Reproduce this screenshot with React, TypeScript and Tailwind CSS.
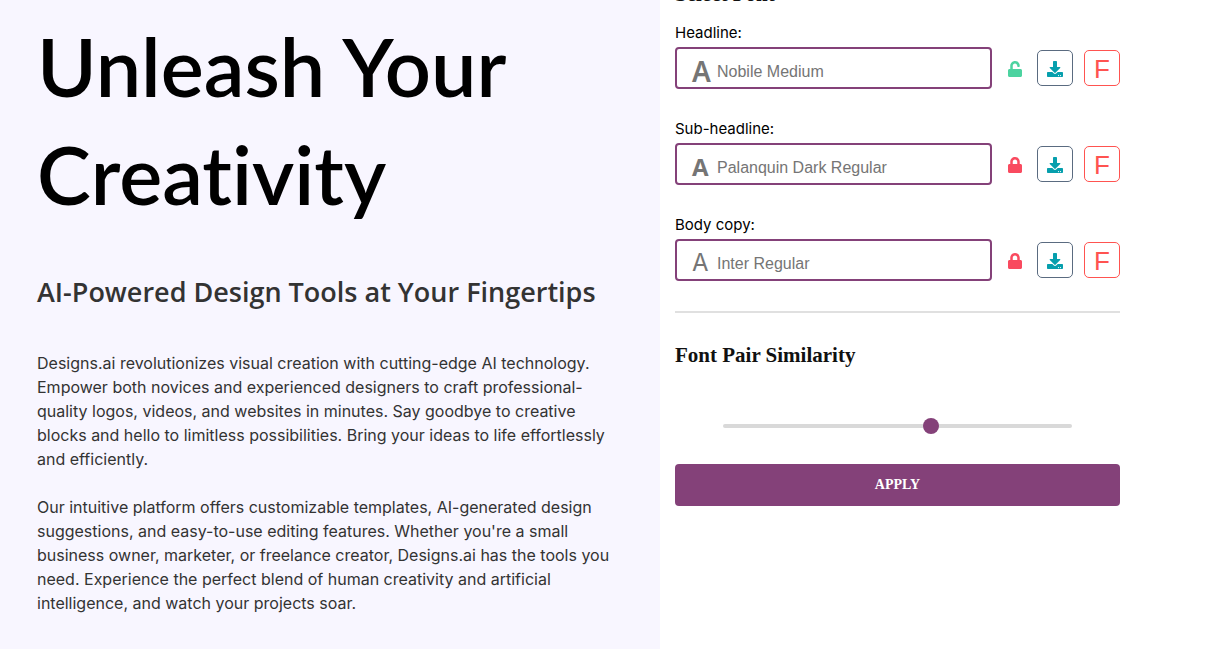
import { useState } from 'react';
import { FaDownload, FaLock, FaUnlock } from 'react-icons/fa';

type Slot = {
  id: string;
  label: string;
  font: string;
  locked: boolean;
  sample: string;
};

const slots: Slot[] = [
  { id: 'headline', label: 'Headline:', font: 'Nobile Medium', locked: false, sample: "font-['Noto_Sans',sans-serif] font-semibold text-[28px] leading-6" },
  { id: 'sub-headline', label: 'Sub-headline:', font: 'Palanquin Dark Regular', locked: true, sample: "font-['Open_Sans',sans-serif] font-bold text-2xl leading-8" },
  { id: 'body-copy', label: 'Body copy:', font: 'Inter Regular', locked: true, sample: "font-['Inter',sans-serif] font-normal text-2xl leading-8" },
];

function FontRow({ slot }: { slot: Slot }) {
  const [locked, setLocked] = useState(slot.locked);
  return (
    <div className="h-24">
      <label htmlFor={slot.id} className="block pb-1 font-['Inter',sans-serif] text-[15px] leading-5 text-black">
        {slot.label}
      </label>
      <div className="flex items-center">
        <div className="flex h-[42px] min-w-0 flex-1 items-center rounded border-2 border-[#844179] pt-1.5 pl-[15px] text-[#757575]">
          <span aria-hidden="true" className={`w-[25px] shrink-0 ${slot.sample}`}>A</span>
          <input
            id={slot.id}
            placeholder={slot.font}
            className="w-full min-w-0 bg-transparent pt-0.5 text-base outline-none placeholder:text-[#757575]"
          />
        </div>
        <button
          type="button"
          aria-label={locked ? 'Unlock font' : 'Lock font'}
          onClick={() => setLocked(!locked)}
          className={`ml-4 flex w-[14px] items-center pt-0.5 ${locked ? 'text-[#f94a5f]' : 'text-[#4cd3a0]'}`}
        >
          {locked ? <FaLock className="h-4 w-[14px]" /> : <FaUnlock className="h-4 w-[14px]" />}
        </button>
        <button type="button" aria-label="Download font" className="ml-[15px] flex size-9 items-center justify-center rounded-[5px] border border-[#5a6b80] pt-0.5 text-[#069fad]">
          <FaDownload className="size-4" />
        </button>
        <button type="button" aria-label="Font details" className="ml-[11px] flex size-9 items-center justify-center rounded-[5px] border border-[#ff5350] pt-0.5 text-[26px] leading-8 text-[#ff5350]">
          F
        </button>
      </div>
    </div>
  );
}

export default function App() {
  const [similarity, setSimilarity] = useState(60);
  return (
    <div className="flex h-screen overflow-hidden bg-white font-['Liberation_Sans',Arial,sans-serif]">
      <section className="mb-px w-[660px] shrink-0 bg-[#f8f6ff] pt-3 pr-12 pl-[37px]">
        <h1 className="font-['Lato',sans-serif] text-[81px] leading-[108px] font-semibold text-black [font-variant-ligatures:none]">Unleash Your Creativity</h1>
        <h2 className="mt-11 font-['Open_Sans',sans-serif] text-[27px] leading-10 font-semibold text-[#333]">
          AI-Powered Design Tools at Your Fingertips
        </h2>
        <div className="mt-[39px] space-y-6 font-['Inter',sans-serif] text-base leading-6 text-[#333]">
          <p>
            Designs.ai revolutionizes visual creation with cutting-edge AI technology. Empower both novices and experienced designers to craft professional-quality logos, videos, and websites in minutes. Say goodbye to creative blocks and hello to limitless possibilities. Bring your ideas to life effortlessly and efficiently.
          </p>
          <p>
            Our intuitive platform offers customizable templates, AI-generated design suggestions, and easy-to-use editing features. Whether you're a small business owner, marketer, or freelance creator, Designs.ai has the tools you need. Experience the perfect blend of human creativity and artificial intelligence, and watch your projects soar.
          </p>
        </div>
      </section>
      <aside className="mr-[101px] ml-[15px] min-w-0 flex-1">
        <h2 className="-mt-5 font-['Liberation_Serif',serif] text-[21px] leading-7 font-bold text-[#111]">Select Font</h2>
        <div className="mt-[15px]">
          {slots.map((slot) => (
            <FontRow key={slot.id} slot={slot} />
          ))}
        </div>
        <hr className="border-t-2 border-[#e0e0e0]" />
        <h2 className="mt-7 font-['Liberation_Serif',serif] text-[21px] leading-7 font-bold text-[#111]">
          <label htmlFor="similarity">Font Pair Similarity</label>
        </h2>
        <div className="mx-12 mt-[49px] flex h-4 items-center">
          <input
            id="similarity"
            type="range"
            min={0}
            max={100}
            value={similarity}
            onChange={(e) => setSimilarity(Number(e.target.value))}
            className="h-1 w-full appearance-none rounded-full bg-[#d9d9d9] outline-none [&::-webkit-slider-thumb]:size-4 [&::-webkit-slider-thumb]:appearance-none [&::-webkit-slider-thumb]:rounded-full [&::-webkit-slider-thumb]:bg-[#844179]"
          />
        </div>
        <button type="button" className="mt-[30px] h-[42px] w-full rounded bg-[#844179] font-['Liberation_Serif',serif] text-sm font-bold text-white">
          APPLY
        </button>
      </aside>
    </div>
  );
}
